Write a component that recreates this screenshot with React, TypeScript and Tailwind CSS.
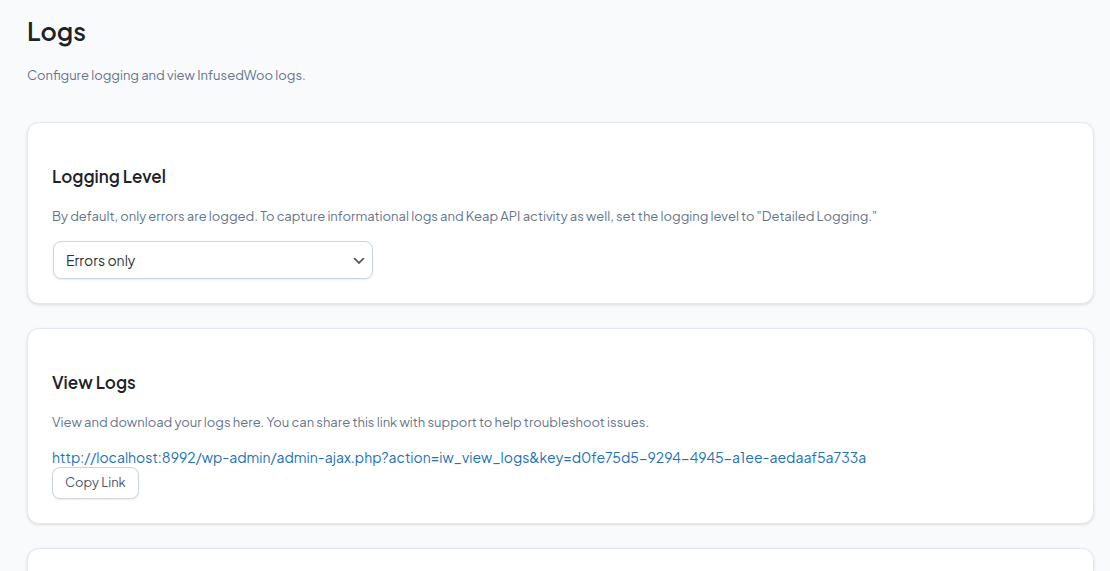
import { useState } from 'react'
import type { ReactNode } from 'react'

const LOG_URL =
  'http://localhost:8992/wp-admin/admin-ajax.php?action=iw_view_logs&key=d0fe75d5-9294-4945-a1ee-aedaaf5a733a'

function Card({ children }: { children?: ReactNode }) {
  return (
    <section className="min-h-32 shrink-0 rounded-xl border border-[#e2e8f0] bg-white px-6 pt-[39px] pb-6 shadow-[0_1px_3px_rgba(0,0,0,0.12)]">
      {children}
    </section>
  )
}

function CardHeader({ title, description }: { title: string; description: string }) {
  return (
    <>
      <h2 className="text-[17px] leading-7 font-semibold text-[#1d2327]">{title}</h2>
      <p className="mt-4 mb-[15px] text-[13px] leading-5 text-[#64748b]">{description}</p>
    </>
  )
}

export default function App() {
  const [level, setLevel] = useState('errors')

  return (
    <main className="flex h-dvh flex-col overflow-hidden bg-[#f8fafc] pt-[13px] pr-4 pl-[27px] font-['Plus_Jakarta_Sans',Inter,sans-serif]">
      <header className="mb-[37px]">
        <h1 className="text-[25px] leading-9 font-semibold text-[#1d2327]">Logs</h1>
        <p className="mt-4 text-[13px] leading-5 text-[#64748b]">
          Configure logging and view InfusedWoo logs.
        </p>
      </header>

      <div className="flex flex-col gap-6">
        <Card>
          <CardHeader
            title="Logging Level"
            description={
              'By default, only errors are logged. To capture informational logs and Keap API activity as well, set the logging level to "Detailed Logging."'
            }
          />
          <div className="relative mx-px w-80">
            <select
              aria-label="Logging Level"
              value={level}
              onChange={(e) => setLevel(e.target.value)}
              className="block h-[38px] w-full appearance-none rounded-lg border border-[#cbd5e0] bg-white px-3 text-sm text-[#2c3338] shadow-[0_1px_2px_rgba(0,0,0,0.08)]"
            >
              <option value="errors">Errors only</option>
              <option value="detailed">Detailed Logging</option>
            </select>
            <svg
              viewBox="0 0 20 20"
              className="pointer-events-none absolute top-3 right-1.5 size-4"
              fill="#50575e"
            >
              <path d="M5 6l5 5 5-5 2 1-7 7-7-7 2-1z" />
            </svg>
          </div>
        </Card>

        <Card>
          <CardHeader
            title="View Logs"
            description="View and download your logs here. You can share this link with support to help troubleshoot issues."
          />
          <a href={LOG_URL} className="block text-sm leading-5 text-[#2271b1]">
            {LOG_URL}
          </a>
          <button
            type="button"
            onClick={() => navigator.clipboard.writeText(LOG_URL)}
            className="block h-8 rounded-lg border border-[#cbd5e0] bg-white px-3 text-[13px] text-[#4a5568] shadow-[0_1px_2px_rgba(0,0,0,0.08)]"
          >
            Copy Link
          </button>
        </Card>

        <Card />
      </div>
    </main>
  )
}
